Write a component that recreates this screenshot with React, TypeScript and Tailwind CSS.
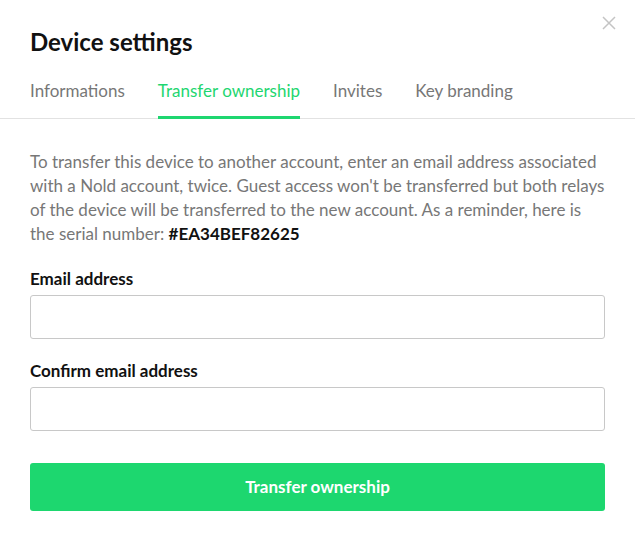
import React from "react";

export default function App() {
  const tabs = ["Informations", "Transfer ownership", "Invites", "Key branding"];
  return (
    <div
      className="relative w-[635px] h-[540px] bg-white overflow-hidden"
      style={{ fontFamily: "Lato, 'Noto Sans', sans-serif" }}
    >
      <button className="absolute right-[19px] top-[16px] w-[14px] h-[14px]" aria-label="Close">
        <svg width="14" height="14" viewBox="0 0 14 14" fill="none">
          <path d="M1 1L13 13M13 1L1 13" stroke="#c4c4c4" strokeWidth="1.5" />
        </svg>
      </button>
      <div className="px-[30px] pt-[28px]">
        <h1 className="text-[24px] leading-[28px] font-bold text-[#111]">Device settings</h1>
      </div>
      <div className="mt-[23px] border-b border-[#e2e2e2] px-[30px] flex gap-[33px]">
        {tabs.map((t, i) => (
          <div
            key={t}
            className={
              i === 1
                ? "text-[17px] leading-[24px] pb-[13px] -mb-px border-b-[3px] border-[#1ed670] text-[#1ed670]"
                : "text-[17px] leading-[24px] pb-[13px] -mb-px border-b-[3px] border-transparent text-[#777]"
            }
          >
            {t}
          </div>
        ))}
      </div>
      <div className="px-[30px] pt-[31px]">
        <p className="text-[17px] leading-[24px] text-[#777]">
          To transfer this device to another account, enter an email address associated with a Nold account, twice. Guest access won't be transferred but both relays of the device will be transferred to the new account. As a reminder, here is the serial number:{" "}
          <span className="font-bold text-[#111]">#EA34BEF82625</span>
        </p>
        <label className="block mt-[21px] text-[17px] leading-[24px] font-bold text-[#111]">Email address</label>
        <input className="block mt-[4px] w-full h-[44px] border border-[#c8c8c8] rounded-[3px] px-3 outline-none" />
        <label className="block mt-[20px] text-[17px] leading-[24px] font-bold text-[#111]">Confirm email address</label>
        <input className="block mt-[4px] w-full h-[44px] border border-[#c8c8c8] rounded-[3px] px-3 outline-none" />
        <button className="block mt-[32px] w-full h-[48px] rounded-[3px] bg-[#1dd76f] text-white text-[17px] font-bold">
          Transfer ownership
        </button>
      </div>
    </div>
  );
}
